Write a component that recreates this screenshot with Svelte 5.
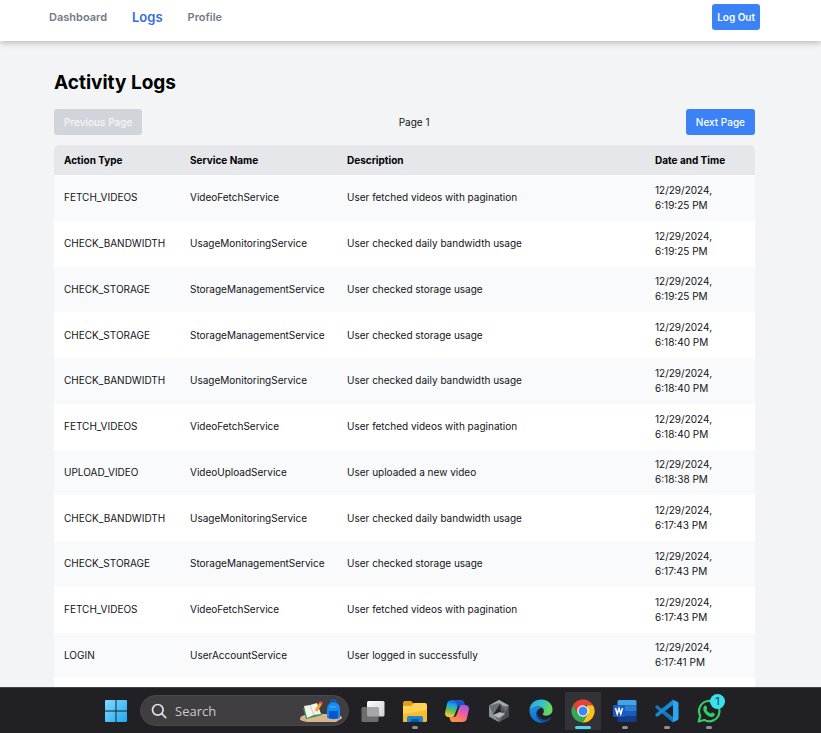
<script>
  const rows = [
    ['FETCH_VIDEOS', 'VideoFetchService', 'User fetched videos with pagination', '6:19:25 PM'],
    ['CHECK_BANDWIDTH', 'UsageMonitoringService', 'User checked daily bandwidth usage', '6:19:25 PM'],
    ['CHECK_STORAGE', 'StorageManagementService', 'User checked storage usage', '6:19:25 PM'],
    ['CHECK_STORAGE', 'StorageManagementService', 'User checked storage usage', '6:18:40 PM'],
    ['CHECK_BANDWIDTH', 'UsageMonitoringService', 'User checked daily bandwidth usage', '6:18:40 PM'],
    ['FETCH_VIDEOS', 'VideoFetchService', 'User fetched videos with pagination', '6:18:40 PM'],
    ['UPLOAD_VIDEO', 'VideoUploadService', 'User uploaded a new video', '6:18:38 PM'],
    ['CHECK_BANDWIDTH', 'UsageMonitoringService', 'User checked daily bandwidth usage', '6:17:43 PM'],
    ['CHECK_STORAGE', 'StorageManagementService', 'User checked storage usage', '6:17:43 PM'],
    ['FETCH_VIDEOS', 'VideoFetchService', 'User fetched videos with pagination', '6:17:43 PM'],
    ['LOGIN', 'UserAccountService', 'User logged in successfully', '6:17:41 PM']
  ];
</script>

<div class="screen">
  <div class="page">
    <header>
      <nav>
        <a href="#dashboard">Dashboard</a>
        <a href="#logs" class="current" aria-current="page">Logs</a>
        <a href="#profile">Profile</a>
      </nav>
      <button class="btn logout">Log Out</button>
    </header>
    <main>
      <h1>Activity Logs</h1>
      <div class="pager">
        <button class="btn" disabled>Previous Page</button>
        <span>Page 1</span>
        <button class="btn">Next Page</button>
      </div>
      <table>
        <thead>
          <tr>
            <th class="type">Action Type</th>
            <th class="service">Service Name</th>
            <th>Description</th>
            <th class="date">Date and Time</th>
          </tr>
        </thead>
        <tbody>
          {#each rows as [type, service, text, time]}
            <tr>
              <td>{type}</td>
              <td>{service}</td>
              <td>{text}</td>
              <td>12/29/2024, <span class="time">{time}</span></td>
            </tr>
          {/each}
          <tr><td></td><td></td><td></td><td></td></tr>
        </tbody>
      </table>
    </main>
  </div>

  <footer class="taskbar">
    <button class="app" aria-label="Start">
      <svg width="24" height="24" viewBox="0 0 24 24">
        <defs>
          <linearGradient id="win" x1="0" y1="0" x2="1" y2="1" gradientUnits="objectBoundingBox">
            <stop offset="0" stop-color="#7ddcff" /><stop offset="1" stop-color="#22a7f2" />
          </linearGradient>
        </defs>
        <path fill="url(#win)" d="M2 1h9.500v10.500H1V2a1 1 0 0 1 1-1zM12.500 1H22a1 1 0 0 1 1 1v9.500H12.500zM1 12.500h10.500V23H2a1 1 0 0 1-1-1zM12.500 12.500H23V22a1 1 0 0 1-1 1h-9.500z" />
      </svg>
    </button>
    <label class="search">
      <svg width="16" height="16" viewBox="0 0 16 16" fill="none" stroke="#e2e0e2" stroke-width="1.700" stroke-linecap="round" aria-hidden="true">
        <circle cx="6.800" cy="6.800" r="5.300" /><path d="M10.700 10.700l4 4" />
      </svg>
      <input type="text" placeholder="Search" aria-label="Search" />
      <svg width="44" height="24" viewBox="0 0 44 24" aria-hidden="true">
        <path fill="#d9b58d" d="M1 20c0-3 5-5 12-5h19c7 0 11 2 11 4 0 1-2 1-3 2l-3 2H8c-2-1-7-1-7-3z" />
        <path fill="#318b5a" d="M4 9l14-3 5 10-16 4z" />
        <path fill="#f3f4e9" d="M5 7l6-1 7-2 4 11-7 1-7 3z" />
        <path stroke="#bfc8bd" fill="none" d="M11 6l4 10" />
        <path stroke="#f5a12c" stroke-width="3" d="M22 4l-5 8" />
        <path stroke="#ea5b54" stroke-width="3" d="M22.500 3l-1 2" />
        <path fill="none" stroke="#1264c8" stroke-width="1.500" d="M32 4c0-4 5-4 5 0" />
        <path fill="#168bf2" d="M28 10c0-9 13-9 13 0v8c0 3-13 3-13 0z" />
        <path fill="#0757c8" d="M30 12h9v7c-2 1-7 1-9 0z" />
        <path stroke="#49b4ff" d="M31 8h7" />
      </svg>
    </label>
    <button class="app" aria-label="Task view">
      <svg width="24" height="24" viewBox="0 0 24 24">
        <defs><linearGradient id="tv" x2="1" y2="1"><stop stop-color="#fff" /><stop offset="1" stop-color="#cfcfcf" /></linearGradient></defs>
        <rect x="6" y="2" width="17.500" height="15.500" rx="1.500" fill="url(#tv)" />
        <rect x=".5" y="8" width="17" height="15" rx="1.500" fill="#6d6d6f" />
        <path fill="#a6a6a8" d="M6 8h10a1.500 1.500 0 0 1 1.500 1.500v8H7.500A1.500 1.500 0 0 1 6 16z" />
      </svg>
    </button>
    <button class="app open" aria-label="File Explorer">
      <svg width="24" height="24" viewBox="0 0 24 24">
        <path fill="#dfa016" d="M0 4a2 2 0 0 1 2-2h6l3 3v5H0z" />
        <path fill="#ffd253" d="M0 7h8l3-3h11a2 2 0 0 1 2 2v15a2 2 0 0 1-2 2H0z" />
        <path fill="#f7bd2e" d="M0 15l24-4v10a2 2 0 0 1-2 2H0z" />
        <path fill="#1684d8" d="M4 19a2 2 0 0 1 2-2h12a2 2 0 0 1 2 2v4H4z" />
        <path fill="#0a579f" d="M8 20h8v3H8z" />
      </svg>
    </button>
    <button class="app" aria-label="Copilot">
      <svg width="24" height="24" viewBox="0 0 24 24">
        <defs>
          <linearGradient id="ca" x1=".6" y1="0" x2=".3" y2="1"><stop stop-color="#1749c8" /><stop offset=".35" stop-color="#19a9e6" /><stop offset=".65" stop-color="#65bd58" /><stop offset="1" stop-color="#ffce28" /></linearGradient>
          <linearGradient id="cb" x1=".7" y1="0" x2=".3" y2="1"><stop stop-color="#a15be8" /><stop offset=".45" stop-color="#ef5c9d" /><stop offset="1" stop-color="#ff943e" /></linearGradient>
        </defs>
        <path fill="url(#ca)" d="M7 1h9c2 0 2.500 1 3 2.500l.8 2.700h-4.500c-2 0-2.500 1-3 2.500L9.500 16c-.5 1.500-1.500 2-3 2H4c-3 0-4.500-2-3.800-5L2 5c.8-3 2-4 5-4z" />
        <path fill="#1759c8" d="M11 1h5c2 0 2.500 1 3 2.500l.8 2.700h-4.500c-1.500 0-2.500.8-3 2.300z" />
        <path fill="url(#cb)" d="M17 23H8c-2 0-2.500-1-3-2.500L4.200 18h4.500c2 0 2.500-1 3-2.500L14.500 8c.5-1.500 1.500-2 3-2H20c3 0 4.500 2 3.800 5L22 19c-.8 3-2 4-5 4z" />
      </svg>
    </button>
    <button class="app" aria-label="Dev tools">
      <svg width="22" height="24" viewBox="0 0 22 24">
        <path fill="#6b6f74" d="M11 1l10 5.500v11L11 23 1 17.500v-11z" />
        <path fill="#a3a8ac" d="M11 1l10 5.500-5 1L11 4 1 6.500z" />
        <path fill="#494d53" d="M21 6.500v11L11 23l5-7z" />
        <path fill="#8e9397" d="M1 6.500l4 8L11 23 1 17.500z" />
        <path fill="#24262b" d="M12 5l5 7-5 3-7 1z" />
        <path fill="#555a61" d="M12 5l5 7-4 1z" />
        <path fill="#b4b8bb" d="M5 16l7-3 5 2-6 4z" />
      </svg>
    </button>
    <button class="app" aria-label="Edge">
      <svg width="24" height="24" viewBox="0 0 24 24">
        <defs>
          <linearGradient id="ea" y2=".3"><stop stop-color="#2ba8eb" /><stop offset=".55" stop-color="#35c1c8" /><stop offset="1" stop-color="#69da52" /></linearGradient>
          <linearGradient id="eb" x2=".3" y2="1"><stop stop-color="#238de0" /><stop offset="1" stop-color="#1270cd" /></linearGradient>
        </defs>
        <path fill="url(#ea)" d="M.5 11C1 4.500 6 .5 12 .5c7 0 11.500 4.500 11.500 10 0 4-3 6.200-6.500 6.200-2.500 0-4-1-3-2.200 2-2 1-7-5-7-4 0-7 2-8.500 3.500z" />
        <path fill="url(#eb)" d="M.5 11C2 8.500 5 7.500 9 7.500c2 0 3.500.7 4.500 1.500C10 8.500 7 12 8 16c1 3.500 4 6 7.500 7.300C7 25.500.2 19 .5 11z" />
        <path fill="#0d4fa3" d="M10 9.800c-3 3-2 7 .8 9.200 3.500 2.700 8 2.300 11-.7.500-.5.800 0 .5.500-1.500 2.500-4 4.200-6.800 4.500C11 22.500 7.500 19.500 7 16c-.4-3 1-5.200 3-6.200z" />
      </svg>
    </button>
    <button class="app open active" aria-label="Chrome">
      <svg width="24" height="24" viewBox="0 0 24 24">
        <path fill="#e94335" d="M2 6.200A11.500 11.500 0 0 1 22 6.200H12L7.500 15z" />
        <path fill="#fbc116" d="M22 6.200A11.500 11.500 0 0 1 11.500 23.500L17 14.800 16 6.200z" />
        <path fill="#34a853" d="M2 6.200a11.500 11.500 0 0 0 9.500 17.300l5.500-8.700-5 2.500-5-2.500z" />
        <circle cx="12" cy="12" r="5.800" fill="#fff" /><circle cx="12" cy="12" r="4.500" fill="#4285f4" />
      </svg>
    </button>
    <button class="app open" aria-label="Word">
      <svg width="24" height="24" viewBox="0 0 24 24">
        <path fill="#41a5ee" d="M6 1h16a1.500 1.500 0 0 1 1.500 1.500v4h-19v-4A1.500 1.500 0 0 1 6 1z" />
        <path fill="#2b7cd3" d="M4.500 6.500h19V12h-19z" /><path fill="#185abd" d="M4.500 12h19v5.500h-19z" />
        <path fill="#123f8c" d="M4.500 17.500h19v4A1.500 1.500 0 0 1 22 23H6a1.500 1.500 0 0 1-1.500-1.500z" />
        <rect x="0" y="6" width="12" height="12" rx="1" fill="#1b5abe" />
        <path stroke="#fff" stroke-width="1.500" fill="none" d="M2.500 9l1.700 6L6 9.500 7.800 15l1.700-6" />
      </svg>
    </button>
    <button class="app open" aria-label="Visual Studio Code">
      <svg width="24" height="24" viewBox="0 0 24 24">
        <path fill="#1677be" d="M0 8l2-2 16 12v5.500L1.500 9.700z" />
        <path fill="#168bd5" d="M0 16l2 2L18 6V.5L1.500 14.300z" />
        <path fill="#2ba6ee" d="M17 .5l5.500 2.200a2 2 0 0 1 1 1.800v15a2 2 0 0 1-1 1.800L17 23.500c.5-.3 1-.8 1-1.500V2c0-.7-.5-1.200-1-1.500z" />
      </svg>
    </button>
    <button class="app open" aria-label="WhatsApp, 1 notification">
      <svg width="24" height="24" viewBox="0 0 24 24">
        <path fill="none" stroke="#30ce67" stroke-width="2.200" stroke-linejoin="round" d="M1.700 22.500l1.500-5.700A10.200 10.200 0 1 1 7.300 21z" />
        <path fill="#30ce67" d="M8 6.500c.7-.3 1.200 0 1.500.7l.7 1.700c.3.700-.8 1.400-.7 1.900.8 1.800 2.200 3 4 3.800.6.200 1.100-1.200 1.800-1l2 1c.7.300.6 1.400.2 2-1 1.600-3 1.600-5 .8-3-1.200-5-3.500-6-6-.6-2 0-4.300 1.500-4.900z" />
      </svg>
      <span class="badge">1</span>
    </button>
  </footer>
</div>

<style>
  :global(body) { margin: 0; }
  .screen {
    display: flex;
    flex-direction: column;
    height: 100vh;
    font-family: Inter, "Liberation Sans", sans-serif;
    font-size: 10px;
    line-height: 15px;
    color: #111317;
  }
  .page { flex: 1; min-height: 0; overflow: hidden; background: #f2f4f6; }
  header {
    display: flex;
    align-items: center;
    justify-content: space-between;
    padding: 4px 61px 11px 49px;
    background: #fff;
    box-shadow: 0 2px 6px rgba(0, 0, 0, 0.24);
  }
  nav { display: flex; align-items: center; gap: 25px; }
  nav a { font-size: 11px; font-weight: 600; color: #747a86; text-decoration: none; }
  nav .current { font-size: 13px; color: #356be8; }
  .btn {
    height: 26px;
    padding: 0 10px;
    border: 0;
    border-radius: 3px;
    background: #3b82f6;
    color: #fff;
    font: 500 10px/15px Inter, "Liberation Sans", sans-serif;
  }
  .btn:disabled { background: #d1d5db; color: #f5f6f8; }
  .logout { padding: 0 5px; font-weight: 600; }
  main { padding: 30px 66px 0 54px; }
  h1 { margin: 0; font-size: 19px; line-height: 24px; font-weight: 700; color: #000; }
  .pager { display: flex; align-items: center; justify-content: space-between; margin: 14px 0 10px; }
  table {
    width: 100%;
    height: 579px;
    table-layout: fixed;
    border-collapse: collapse;
    border-radius: 5px 5px 0 0;
    overflow: hidden;
    background: #fff;
  }
  th, td { padding: 7px 10px; text-align: left; vertical-align: middle; }
  thead tr { height: 30px; background: #e5e7eb; }
  tbody tr { height: 44px; }
  th { font-weight: 700; color: #000; }
  .type { width: 106px; }
  .service { width: 137px; }
  .date { width: 90px; }
  .time { display: block; white-space: nowrap; }
  tbody tr:nth-child(odd) { background: #f9fafb; }

  .taskbar {
    display: flex;
    align-items: center;
    justify-content: center;
    height: 46px;
    box-sizing: border-box;
    padding-left: 4px;
    border-top: 1px solid #454447;
    background: #212024;
  }
  .app {
    position: relative;
    display: flex;
    align-items: center;
    justify-content: center;
    width: 42px;
    height: 40px;
    padding: 0;
    border: 0;
    background: none;
  }
  .app.open::after {
    content: "";
    position: absolute;
    bottom: 2px;
    left: 18px;
    width: 6px;
    height: 3px;
    border-radius: 2px;
    background: #929194;
  }
  .app.active { background: linear-gradient(#333236, #333236) center / 36px 38px no-repeat; }
  .app.active::after { left: 13px; width: 16px; background: #4cd5ee; }
  .badge {
    position: absolute;
    top: 3px;
    right: 5px;
    width: 15px;
    border-radius: 50%;
    background: #3be0ee;
    color: #163c45;
    font: 11px/15px Inter, sans-serif;
    text-align: center;
  }
  .search {
    display: flex;
    align-items: center;
    gap: 8px;
    width: 209px;
    height: 31px;
    box-sizing: border-box;
    margin: 0 3px;
    padding: 0 5px 0 10px;
    border: 1px solid #49474a;
    border-radius: 16px;
    background: #403e41;
  }
  .search svg { flex: none; }
  .search input {
    flex: 1;
    min-width: 0;
    padding: 0;
    border: 0;
    outline: 0;
    background: none;
    color: #fff;
    font: 13px/18px "Open Sans", "Noto Sans", sans-serif;
  }
  .search input::placeholder { color: #cbc9cc; opacity: 1; }
</style>
